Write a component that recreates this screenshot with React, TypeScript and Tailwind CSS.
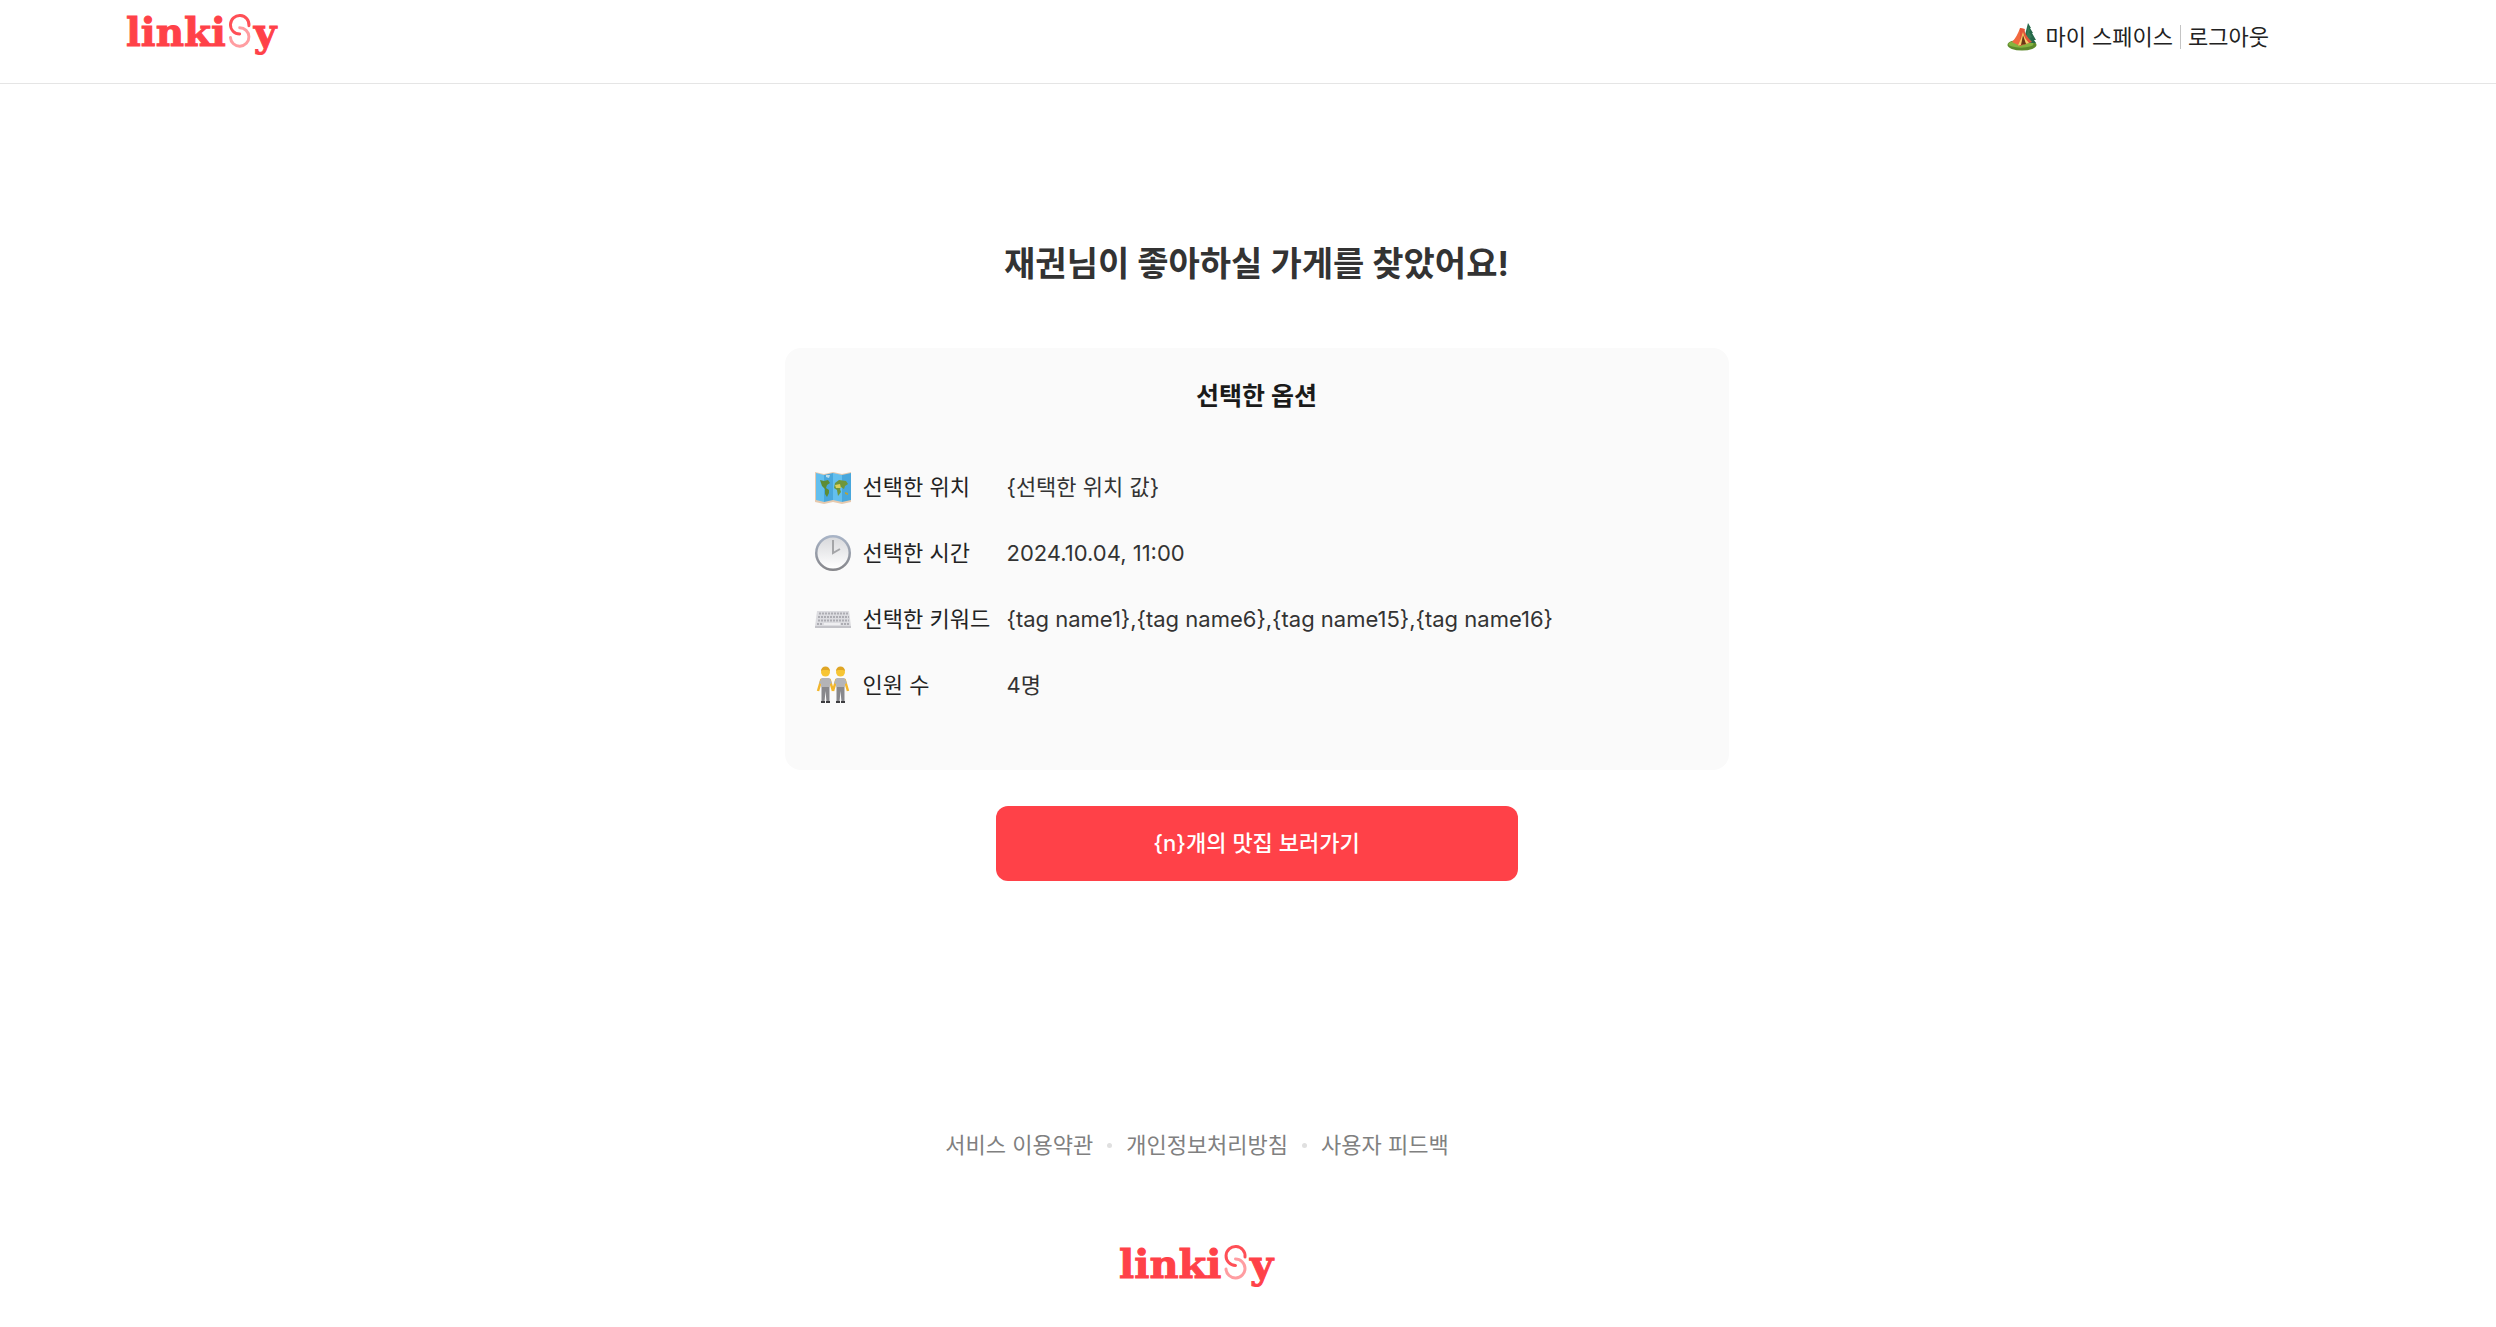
import React from "react";

function Logo({ size }: { size: "sm" | "lg" }) {
  return (
    <a href="#home" aria-label="linkisy" className="block text-[#ff4148]">
      <svg
        viewBox="0 -6 164 56"
        className={size === "sm" ? "block h-[55px] w-[160px]" : "block h-[56px] w-[164px]"}
        fill="currentColor"
      >
        <g stroke="currentColor" strokeWidth="1" fontSize="40" fontWeight="700" fontFamily="DejaVu Serif">
          <text x="0" y="34">linki</text>
          <text x="131" y="34">y</text>
        </g>
        <g fill="none" strokeWidth="3" strokeLinecap="round">
          <path d="M116.500 15 A9.500 9.500 0 1 1 107 25" stroke="#ff9da1" />
          <path d="M126 13 A9.500 9.500 0 1 0 116.500 21.500" stroke="#ff4f56" />
        </g>
      </svg>
    </a>
  );
}

function CampIcon() {
  return (
    <svg viewBox="0 0 30 30" className="size-[30px]" aria-hidden="true">
      <ellipse cx="15" cy="23" rx="14.500" ry="5.500" fill="#5d8a2b" />
      <ellipse cx="14" cy="22" rx="12.500" ry="3.700" fill="#86b440" />
      <path d="M21 1 24 6 23 6 26 11 25 11 29 18 27 18 29 21H16Z" fill="#26694a" />
      <path d="m21 4 2 5-1 1 3 5-2 1 2 4h-6Z" fill="#347a55" />
      <path d="M13 6Q10 15 5 20L13 24 18 7Z" fill="#f2693f" />
      <path d="M13 6 17 7Q19 15 25 20L13 24Z" fill="#e4553a" />
      <path d="M16 10Q14 18 11 23.500L22 21Q17 16 16 10Z" fill="#f7cf6b" />
      <path d="M16 13 14 23 19 22Z" fill="#6b3514" />
    </svg>
  );
}

function MapIcon() {
  return (
    <svg viewBox="0 0 40 40" className="size-10" aria-hidden="true">
      <path d="m2 5 9 2 9-2 9 2 9-2v30l-9 2-9-2-9 2-9-2Z" fill="#e6c9ae" />
      <path d="m3 6 8 2v27l-8-2ZM20 6l9 2v27l-9-2Z" fill="#63bfee" />
      <path d="m11 8 9-2v27l-9 2ZM29 8l9-2v27l-9 2Z" fill="#48a7dc" />
      <path d="m7 13 4 1 4-1 2 3-3 2-1 3 3 2 0 3-2 4-2-3 0-5-3-3-1-3Z" fill="#5d8c35" />
      <path d="m22 16 4-3 7 1 2 3-3 2-1 3-3-2-1 2 1 3-3 4-1-6-3-2Z" fill="#6f963a" />
      <path d="m22 18 5-1 1 4-5 0Z" fill="#d9d05a" />
      <path d="m32 25 3 1v2l-3-1Z" fill="#b5a33c" />
      <path d="m13 8 4 0-1 3-3-1Z" fill="#b9dcea" />
    </svg>
  );
}

function ClockIcon() {
  return (
    <svg viewBox="0 0 40 40" className="size-10" aria-hidden="true">
      <defs>
        <linearGradient id="clockRim" x2="0" y2="1">
          <stop stopColor="#a9b5c8" />
          <stop offset="1" stopColor="#858589" />
        </linearGradient>
        <linearGradient id="clockFace" x2="0" y2="1">
          <stop stopColor="#d8d9dc" />
          <stop offset="1" stopColor="#ffffff" />
        </linearGradient>
      </defs>
      <circle cx="20" cy="20" r="18" fill="url(#clockRim)" />
      <circle cx="20" cy="20" r="15.500" fill="url(#clockFace)" />
      <path d="M20 7v13l7-4" fill="none" stroke="#a4a5a8" strokeWidth="2" />
    </svg>
  );
}

function KeyboardIcon() {
  return (
    <svg viewBox="0 0 40 40" className="size-10" aria-hidden="true">
      <path d="M4 12h32l2 15v2H2v-2Z" fill="#dcdce0" />
      <path d="M2 27h36v2H2Z" fill="#c3c3c8" />
      <g stroke="#adadb3" strokeWidth="1.800" strokeDasharray="2 1">
        <path d="M6 14.500h29M5 18h31M5 21.500h31M4 25h6M28 25h8" />
      </g>
      <path d="M11 25h16" stroke="#efeff1" strokeWidth="2" />
    </svg>
  );
}

function PeopleIcon() {
  return (
    <svg viewBox="0 0 40 40" className="size-10" aria-hidden="true">
      {[12.5, 27.5].map((x) => (
        <g key={x} transform={`translate(${x} 0)`}>
          <path d="M-4 14-7.500 26M4 14 7.500 26" fill="none" stroke="#f2b62c" strokeWidth="2.500" />
          <path d="M-4 20h8V37H1L0 26l-1 11h-3Z" fill="#88888c" />
          <path d="M-4 13h8l2.500 5-2 1-.5 3h-8l-.5-3-2-1Z" fill="#b4b4b7" />
          <path d="M-4.500 37H-.5M.5 37h4" stroke="#3c3c40" strokeWidth="2" />
          <circle cy="7" r="4.500" fill="#f7c533" />
          <path d="M-4.500 6a4.500 4.500 0 0 1 9 0l-2-1h-5Z" fill="#dfa524" />
        </g>
      ))}
    </svg>
  );
}

const options = [
  { icon: <MapIcon />, label: "선택한 위치", value: "{선택한 위치 값}" },
  { icon: <ClockIcon />, label: "선택한 시간", value: "2024.10.04, 11:00" },
  {
    icon: <KeyboardIcon />,
    label: "선택한 키워드",
    value: "{tag name1},{tag name6},{tag name15},{tag name16}",
  },
  { icon: <PeopleIcon />, label: "인원 수", value: "4명" },
];

export default function App() {
  return (
    <div className="min-h-screen bg-white font-['Inter','Noto_Sans_CJK_KR',sans-serif] text-[22px] text-[#333]">
      <header className="flex h-[84px] items-start justify-between border-b border-[#e5e5e5] pt-[7px] pr-[227px] pl-[126px]">
        <Logo size="sm" />
        <nav className="flex items-center pt-[14px] leading-8 text-[#222]">
          <a href="#space" className="flex items-center gap-2">
            <CampIcon />
            마이 스페이스
          </a>
          <span className="mx-[7px] h-6 w-px bg-[#c4c4c4]" />
          <button type="button">로그아웃</button>
        </nav>
      </header>

      <main className="flex flex-col items-center pt-[156px] pl-[17px]">
        <h1 className="text-[34px] leading-[48px] font-bold">재권님이 좋아하실 가게를 찾았어요!</h1>
        <section className="mt-[60px] w-full max-w-[944px] rounded-2xl bg-[#fafafa] px-7 pt-7 pb-[65px]">
          <h2 className="text-center text-[25px] leading-10 font-bold text-[#1a1a1a]">선택한 옵션</h2>
          <dl className="mt-[51px] flex flex-col gap-[26px]">
            {options.map((o) => (
              <div key={o.label} className="flex h-10 items-center">
                <dt className="flex w-[194px] items-center gap-[10px] text-[#222]">
                  {o.icon}
                  {o.label}
                </dt>
                <dd>{o.value}</dd>
              </div>
            ))}
          </dl>
        </section>
        <button
          type="button"
          className="mt-9 h-[75px] w-full max-w-[522px] rounded-xl bg-[#ff4148] font-medium text-white"
        >
          {"{n}개의 맛집 보러가기"}
        </button>
      </main>

      <footer className="flex flex-col items-center pt-[248px] pr-[102px] text-[#808080]">
        <nav className="flex items-center gap-[14px] leading-8">
          <a href="#terms">서비스 이용약관</a>
          <span className="size-[5px] rounded-full bg-[#e0e0e0]" />
          <a href="#privacy">개인정보처리방침</a>
          <span className="size-[5px] rounded-full bg-[#e0e0e0]" />
          <a href="#feedback">사용자 피드백</a>
        </nav>
        <div className="mt-[77px] pl-2">
          <Logo size="lg" />
        </div>
      </footer>
    </div>
  );
}
